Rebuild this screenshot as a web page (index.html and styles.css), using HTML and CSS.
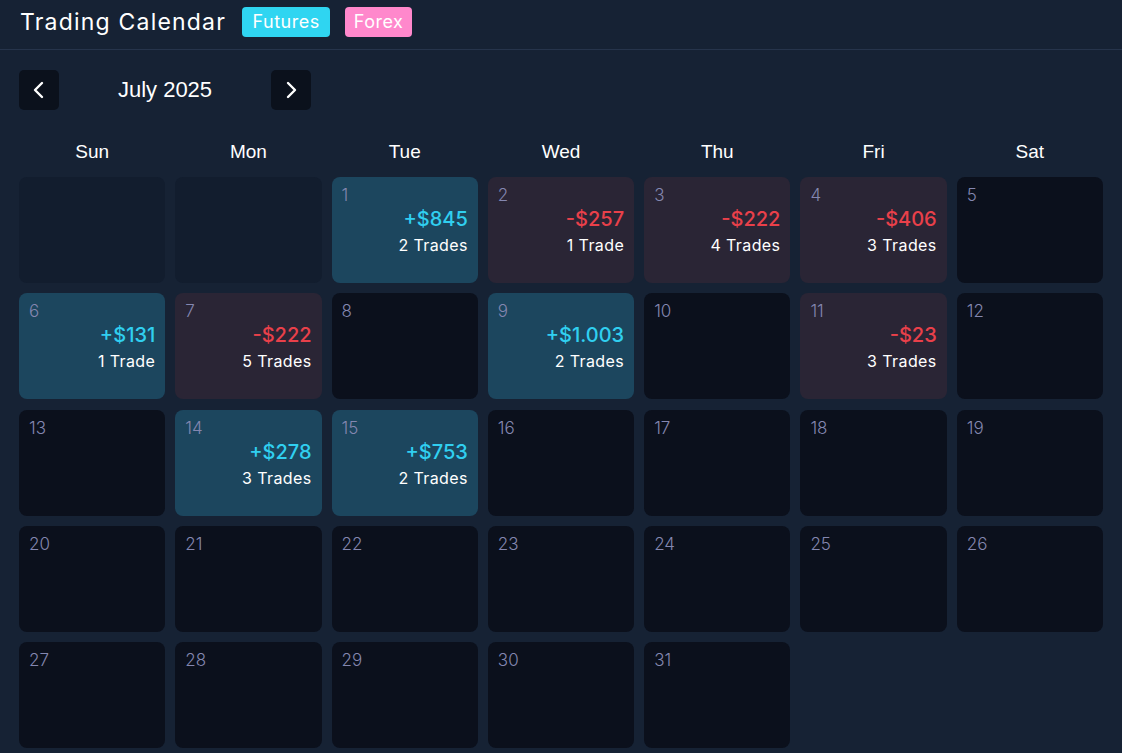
FILE: index.html
```html
<!DOCTYPE html>
<html lang="en">
<head>
<meta charset="utf-8">
<title>Trading Calendar</title>
<link rel="stylesheet" href="styles.css">
</head>
<body>
<header class="topbar">
  <h1 class="title">Trading Calendar</h1>
  <span class="badge badge-futures">Futures</span>
  <span class="badge badge-forex">Forex</span>
</header>
<main class="main">
  <div class="nav">
    <button class="navbtn" aria-label="Previous month">
      <svg width="24" height="24" viewBox="0 0 24 24"><path d="M15 5 L8 12 L15 19" fill="none" stroke="#ffffff" stroke-width="2.4" stroke-linecap="round" stroke-linejoin="round"/></svg>
    </button>
    <div class="month">July 2025</div>
    <button class="navbtn" aria-label="Next month">
      <svg width="24" height="24" viewBox="0 0 24 24"><path d="M9 5 L16 12 L9 19" fill="none" stroke="#ffffff" stroke-width="2.4" stroke-linecap="round" stroke-linejoin="round"/></svg>
    </button>
  </div>
  <div class="weekdays">
    <div>Sun</div><div>Mon</div><div>Tue</div><div>Wed</div><div>Thu</div><div>Fri</div><div>Sat</div>
  </div>
  <div class="grid">
    <div class="cell blank"></div>
    <div class="cell blank"></div>
    <div class="cell pos"><span class="num">1</span><span class="amt">+$845</span><span class="trades">2 Trades</span></div>
    <div class="cell neg"><span class="num">2</span><span class="amt">-$257</span><span class="trades">1 Trade</span></div>
    <div class="cell neg"><span class="num">3</span><span class="amt">-$222</span><span class="trades">4 Trades</span></div>
    <div class="cell neg"><span class="num">4</span><span class="amt">-$406</span><span class="trades">3 Trades</span></div>
    <div class="cell"><span class="num">5</span></div>

    <div class="cell pos"><span class="num">6</span><span class="amt">+$131</span><span class="trades">1 Trade</span></div>
    <div class="cell neg"><span class="num">7</span><span class="amt">-$222</span><span class="trades">5 Trades</span></div>
    <div class="cell"><span class="num">8</span></div>
    <div class="cell pos"><span class="num">9</span><span class="amt">+$1.003</span><span class="trades">2 Trades</span></div>
    <div class="cell"><span class="num">10</span></div>
    <div class="cell neg"><span class="num">11</span><span class="amt">-$23</span><span class="trades">3 Trades</span></div>
    <div class="cell"><span class="num">12</span></div>

    <div class="cell"><span class="num">13</span></div>
    <div class="cell pos"><span class="num">14</span><span class="amt">+$278</span><span class="trades">3 Trades</span></div>
    <div class="cell pos"><span class="num">15</span><span class="amt">+$753</span><span class="trades">2 Trades</span></div>
    <div class="cell"><span class="num">16</span></div>
    <div class="cell"><span class="num">17</span></div>
    <div class="cell"><span class="num">18</span></div>
    <div class="cell"><span class="num">19</span></div>

    <div class="cell"><span class="num">20</span></div>
    <div class="cell"><span class="num">21</span></div>
    <div class="cell"><span class="num">22</span></div>
    <div class="cell"><span class="num">23</span></div>
    <div class="cell"><span class="num">24</span></div>
    <div class="cell"><span class="num">25</span></div>
    <div class="cell"><span class="num">26</span></div>

    <div class="cell"><span class="num">27</span></div>
    <div class="cell"><span class="num">28</span></div>
    <div class="cell"><span class="num">29</span></div>
    <div class="cell"><span class="num">30</span></div>
    <div class="cell"><span class="num">31</span></div>
  </div>
</main>
</body>
</html>
```

FILE: styles.css
```css
* { box-sizing: border-box; }

html, body {
  margin: 0;
  padding: 0;
  background: #162234;
  color: #ffffff;
  font-family: Inter, "Open Sans", sans-serif;
}

.topbar {
  display: flex;
  align-items: center;
  height: 50px;
  padding: 0 20px 6px 20px;
  border-bottom: 1px solid #26344b;
}

.title {
  margin: 0 16px 0 0;
  font-size: 23px;
  font-weight: 400;
  letter-spacing: 1.2px;
}

.badge {
  display: inline-flex;
  align-items: center;
  justify-content: center;
  height: 30px;
  padding: 0;
  border-radius: 4px;
  font-size: 18px;
  letter-spacing: 0.5px;
  color: #ffffff;
  margin-right: 15px;
}

.badge-futures { background: #2fd5f1; width: 88px; }
.badge-forex { background: #ff88cc; width: 67px; }

.main {
  padding: 20px 19px 0 19px;
}

.nav {
  display: flex;
  align-items: center;
  height: 40px;
}

.navbtn {
  width: 40px;
  height: 40px;
  border: none;
  border-radius: 5px;
  background: #0b111c;
  display: flex;
  align-items: center;
  justify-content: center;
  padding: 0;
}

.month {
  width: 212px;
  text-align: center;
  font-family: "Liberation Sans", Arial, sans-serif;
  font-size: 22px;
}

.weekdays {
  display: grid;
  grid-template-columns: repeat(7, 1fr);
  column-gap: 10px;
  height: 24px;
  margin-top: 30px;
  margin-bottom: 13px;
  align-items: center;
  text-align: center;
  font-family: "Liberation Sans", Arial, sans-serif;
  font-size: 19px;
}

.grid {
  display: grid;
  grid-template-columns: repeat(7, 1fr);
  grid-auto-rows: 106px;
  column-gap: 10px;
  row-gap: 10.25px;
}

.cell {
  display: flex;
  flex-direction: column;
  border-radius: 8px;
  background: #0b101c;
  padding: 7px 10px 0 10px;
}

.cell.blank { background: #121d2e; }
.cell.pos { background: #1c465e; }
.cell.neg { background: #2a2535; }

.num {
  font-size: 17px;
  font-weight: 300;
  color: #8487b0;
  line-height: 22px;
}

.amt {
  text-align: right;
  font-size: 20px;
  font-weight: 500;
  line-height: 27px;
}

.pos .amt { color: #30cff0; }
.neg .amt { color: #e9404a; }

.trades {
  text-align: right;
  font-size: 16px;
  letter-spacing: 0.4px;
  line-height: 24px;
}
```
